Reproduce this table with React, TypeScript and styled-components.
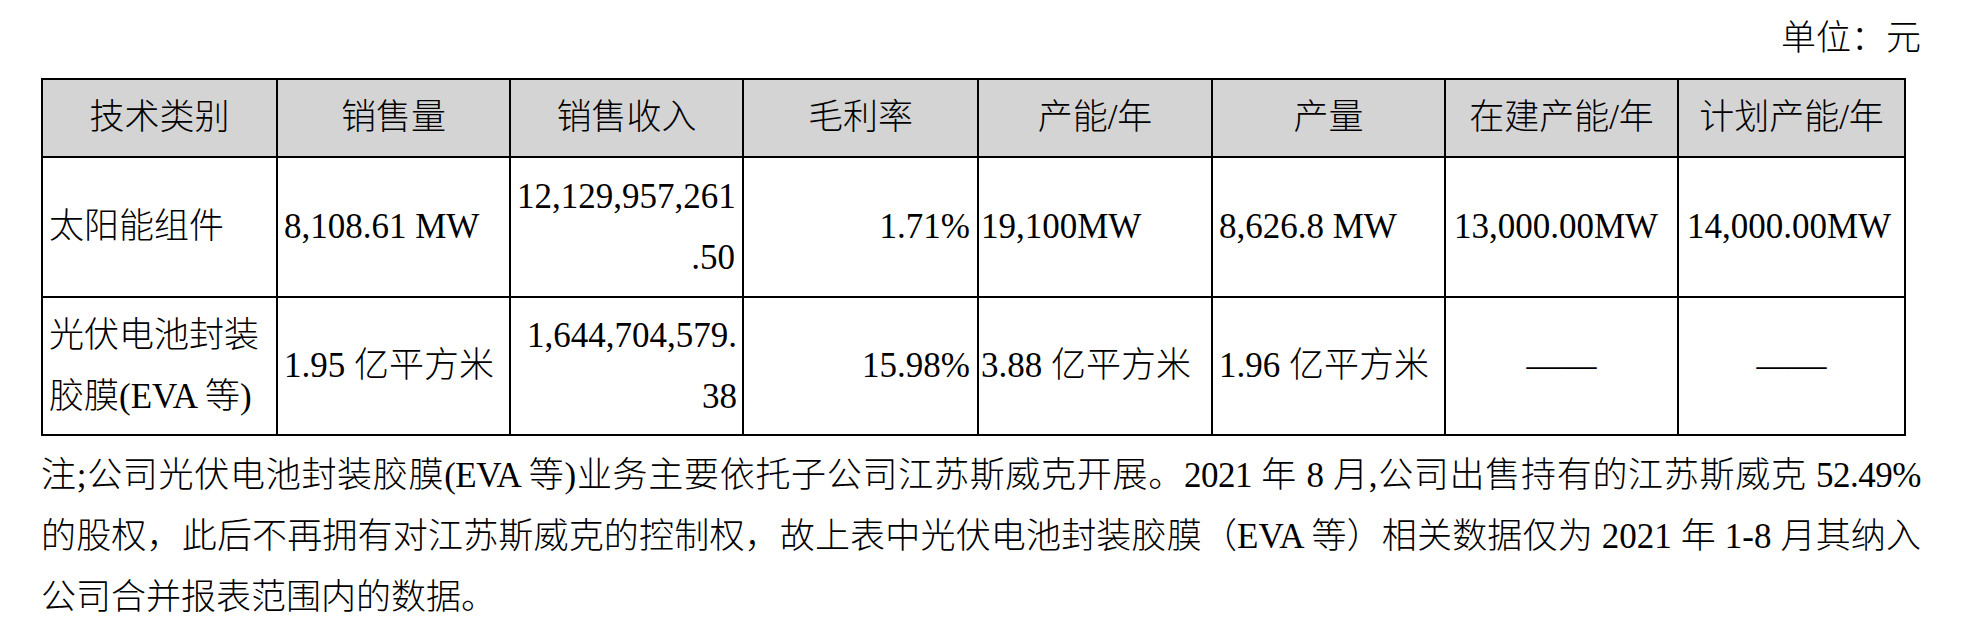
import React, { FC, ReactNode } from 'react';
import styled, { createGlobalStyle } from 'styled-components';

const GlobalStyle = createGlobalStyle`
    html, body {
        margin: 0;
        padding: 0;
        background: #ffffff;
    }
    body {
        font-family: 'Liberation Serif', 'Noto Sans CJK SC', serif;
        color: #000000;
    }
`;

const Page = styled.div`
    width: 1880px;
    padding: 8px 0 0 41px;
    font-size: 35px;
    font-weight: 300;
`;

const UnitLine = styled.div`
    line-height: 61px;
    height: 61px;
    text-align: right;
    margin-bottom: 8.5px;
`;

const Table = styled.table`
    width: 1865px;
    table-layout: fixed;
    border-collapse: separate;
    border-spacing: 0;
    border-top: 2px solid #000;
    border-left: 2px solid #000;
`;

type Align = 'left' | 'right' | 'center';

const HeadCell = styled.th`
    box-sizing: border-box;
    height: 78px;
    padding: 0;
    background: #d4d4d4;
    font-weight: 300;
    text-align: center;
    vertical-align: middle;
    line-height: 61px;
    border-right: 2px solid #000;
    border-bottom: 2px solid #000;
`;

const Cell = styled.td<{ $align?: Align; $padL?: number; $padR?: number; $h: number }>`
    box-sizing: border-box;
    height: ${(p) => p.$h}px;
    padding: 0 ${(p) => p.$padR ?? 7}px 0 ${(p) => p.$padL ?? 6}px;
    text-align: ${(p) => p.$align ?? 'left'};
    vertical-align: middle;
    line-height: 61px;
    white-space: nowrap;
    border-right: 2px solid #000;
    border-bottom: 2px solid #000;
`;

const Note = styled.div`
    margin-top: 9px;
    width: 1880px;
`;

const NoteLine = styled.div<{ $last?: boolean; $tight?: boolean }>`
    line-height: 61px;
    text-align: justify;
    text-align-last: ${(p) => (p.$last ? 'left' : 'justify')};
    letter-spacing: ${(p) => (p.$tight ? '-0.5px' : '0')};
`;

const columns = [235, 233, 233, 235, 234, 233, 233, 227];
const headers = ['技术类别', '销售量', '销售收入', '毛利率', '产能/年', '产量', '在建产能/年', '计划产能/年'];

interface RowCell {
    content: ReactNode;
    align?: Align;
    padL?: number;
    padR?: number;
}

const rows: { height: number; cells: RowCell[] }[] = [
    {
        height: 140,
        cells: [
            { content: '太阳能组件', padL: 6 },
            { content: '8,108.61 MW' },
            {
                content: (
                    <>
                        12,129,957,261
                        <br />
                        .50
                    </>
                ),
                align: 'right',
            },
            { content: '1.71%', align: 'right', padR: 7 },
            { content: '19,100MW', padL: 2 },
            { content: '8,626.8 MW' },
            { content: '13,000.00MW', padL: 8 },
            { content: '14,000.00MW', padL: 8 },
        ],
    },
    {
        height: 138,
        cells: [
            {
                content: (
                    <>
                        光伏电池封装
                        <br />
                        胶膜(EVA 等)
                    </>
                ),
                padL: 6,
            },
            { content: '1.95 亿平方米' },
            {
                content: (
                    <>
                        1,644,704,579.
                        <br />
                        38
                    </>
                ),
                align: 'right',
                padR: 5,
            },
            { content: '15.98%', align: 'right', padR: 7 },
            { content: '3.88 亿平方米', padL: 2 },
            { content: '1.96 亿平方米' },
            { content: '——', align: 'center', padL: 0, padR: 0 },
            { content: '——', align: 'center', padL: 0, padR: 0 },
        ],
    },
];

const App: FC = () => {
    return (
        <>
            <GlobalStyle />
            <Page>
                <UnitLine>单位：元</UnitLine>
                <Table>
                    <colgroup>
                        {columns.map((w, i) => (
                            <col key={i} style={{ width: w }} />
                        ))}
                    </colgroup>
                    <thead>
                        <tr>
                            {headers.map((h) => (
                                <HeadCell key={h}>{h}</HeadCell>
                            ))}
                        </tr>
                    </thead>
                    <tbody>
                        {rows.map((row, r) => (
                            <tr key={r}>
                                {row.cells.map((c, i) => (
                                    <Cell
                                        key={i}
                                        $h={row.height}
                                        $align={c.align}
                                        $padL={c.padL}
                                        $padR={c.padR}
                                    >
                                        {c.content}
                                    </Cell>
                                ))}
                            </tr>
                        ))}
                    </tbody>
                </Table>
                <Note>
                    <NoteLine $tight>
                        注;公司光伏电池封装胶膜(EVA 等)业务主要依托子公司江苏斯威克开展。2021 年 8 月,公司出售持有的江苏斯威克 52.49%
                    </NoteLine>
                    <NoteLine>
                        的股权，此后不再拥有对江苏斯威克的控制权，故上表中光伏电池封装胶膜（EVA 等）相关数据仅为 2021 年 1-8 月其纳入
                    </NoteLine>
                    <NoteLine $last>公司合并报表范围内的数据。</NoteLine>
                </Note>
            </Page>
        </>
    );
};

export default App;
